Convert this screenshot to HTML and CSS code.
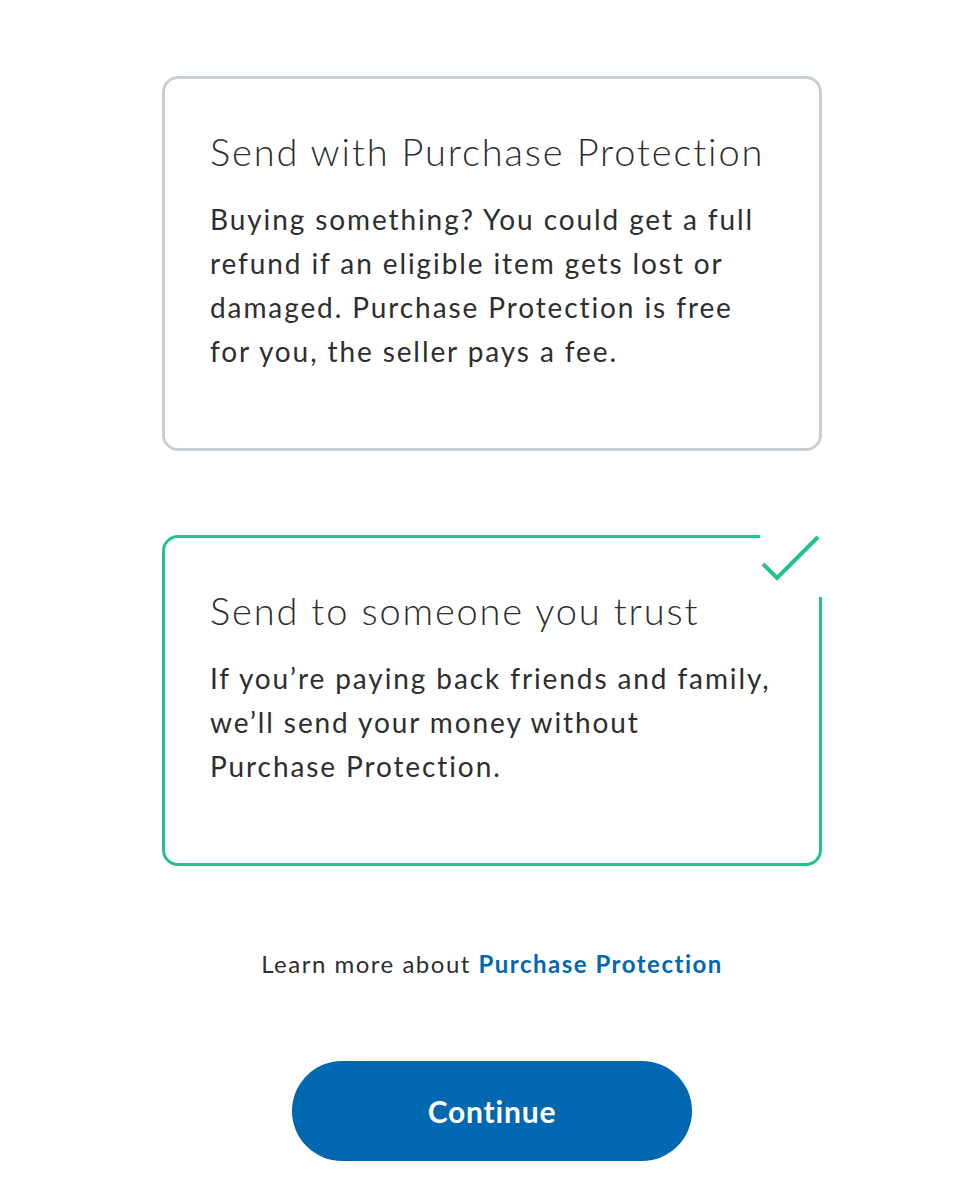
FILE: index.html
```html
<!DOCTYPE html>
<html>
<head>
<meta charset="utf-8">
<link rel="stylesheet" href="styles.css">
</head>
<body>
<main class="page">
  <section class="card">
    <h2 class="card-title">Send with Purchase Protection</h2>
    <p class="card-text">Buying something? You could get a full refund if an eligible item gets lost or damaged. Purchase Protection is free for you, the seller pays a fee.</p>
  </section>
  <section class="card card-selected">
    <span class="check">
      <svg width="62" height="62" viewBox="0 0 62 62"><path d="M3 29 L17 43 L58 2" fill="none" stroke="#1fc486" stroke-width="4"/></svg>
    </span>
    <h2 class="card-title">Send to someone you trust</h2>
    <p class="card-text">If you’re paying back friends and family, we’ll send your money without Purchase Protection.</p>
  </section>
  <p class="learn">Learn more about <a class="learn-link" href="#">Purchase Protection</a></p>
  <button class="continue">Continue</button>
</main>
</body>
</html>
```
FILE: styles.css
```css
html, body {
  margin: 0;
  padding: 0;
  background: #ffffff;
}
body {
  font-family: "Lato", "Open Sans", sans-serif;
  color: #2c2e2f;
}
.page {
  width: 660px;
  margin-left: 162px;
  padding-top: 76px;
  display: flex;
  flex-direction: column;
  align-items: stretch;
}
.card {
  position: relative;
  border: 3px solid #c9d0d5;
  border-radius: 16px;
  padding: 50px 45px 75px 45px;
  margin-bottom: 84px;
}
.card-selected {
  border-color: #1fc486;
  margin-bottom: 76px;
}
.check {
  position: absolute;
  top: -3px;
  right: -3px;
  width: 62px;
  height: 62px;
  background: #ffffff;
  display: block;
}
.check svg {
  display: block;
}
.card-title {
  margin: 0 0 24px;
  font-size: 38px;
  line-height: 44px;
  font-weight: 300;
  letter-spacing: 1.85px;
}
.card-text {
  margin: 0;
  font-size: 28px;
  line-height: 44px;
  font-weight: 400;
  letter-spacing: 1.9px;
}
.learn {
  margin: 0;
  text-align: center;
  font-size: 24px;
  line-height: 44px;
  letter-spacing: 1.5px;
}
.learn-link {
  color: #0067b1;
  font-weight: 700;
  text-decoration: none;
}
.continue {
  align-self: center;
  margin-top: 75px;
  width: 400px;
  height: 100px;
  border: none;
  border-radius: 50px;
  background: #0067b1;
  color: #ffffff;
  font-family: "Lato", "Open Sans", sans-serif;
  font-size: 30px;
  font-weight: 700;
  letter-spacing: 0.8px;
}
```
